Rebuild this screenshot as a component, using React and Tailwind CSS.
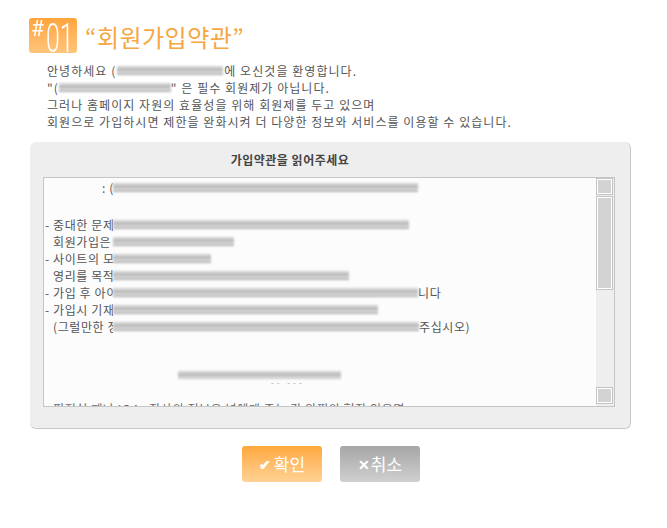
import React from "react";

const font = { fontFamily: '"Noto Sans CJK KR", "Noto Sans", sans-serif' };

function Blur({ w, className = "" }) {
  return (
    <span
      className={`inline-block h-[9px] align-middle blur-[0.8px] bg-[repeating-linear-gradient(180deg,#bdbdbd_0px,#ececec_2px,#9d9d9d_3px,#dcdcdc_5px)] ${className}`}
      style={{ width: w }}
    />
  );
}

function Row({ pre, bar, post, indent }) {
  return (
    <div className="flex items-center h-[17px] whitespace-nowrap">
      <span className={`w-[68px] shrink-0 overflow-hidden ${indent ? "pl-[8px]" : ""}`}>{pre}</span>
      {bar ? <Blur w={bar} /> : null}
      {post ? <span>{post}</span> : null}
    </div>
  );
}

function ScrollBtn() {
  return <div className="h-[17px] w-[17px] border border-[#c4c4c4] bg-[#d3d3d3] shadow-[inset_1px_1px_0_#fff,inset_-1px_-1px_0_#fff]" />;
}

export default function App() {
  return (
    <div className="w-[667px] h-[528px] bg-white text-[#555] text-[12px]" style={font}>
      {/* title */}
      <div className="flex items-center pt-[18px] pl-[29px] gap-[8px]">
        <div className="relative w-[48px] h-[35px] rounded-[3px] bg-gradient-to-b from-[#ffa53a] to-[#ffc47a] text-white overflow-hidden" style={{ fontFamily: "Roboto, sans-serif" }}>
          <span className="absolute left-[2px] top-[0px] text-[22px] leading-none origin-left scale-x-[0.95]">#</span>
          <span className="absolute left-[17px] top-[1px] text-[40px] leading-none font-light origin-left scale-x-[0.62]">01</span>
        </div>
        <div className="text-[24px] leading-[30px] text-[#f6a743] tracking-[0.5px] pt-[3px]">“회원가입약관”</div>
      </div>

      {/* intro */}
      <div className="pl-[47px] pt-[9px] leading-[17px] tracking-[1.05px]">
        <div className="flex items-center whitespace-nowrap">
          <span>안녕하세요 (</span>
          <Blur w={106} className="mx-[1px]" />
          <span>에 오신것을 환영합니다.</span>
        </div>
        <div className="flex items-center whitespace-nowrap">
          <span>"(</span>
          <Blur w={112} />
          <span>" 은 필수 회원제가 아닙니다.</span>
        </div>
        <div>그러나 홈페이지 자원의 효율성을 위해 회원제를 두고 있으며</div>
        <div>회원으로 가입하시면 제한을 완화시켜 더 다양한 정보와 서비스를 이용할 수 있습니다.</div>
      </div>

      {/* agreement panel */}
      <div className="ml-[30px] mt-[12px] w-[601px] h-[287px] rounded-[6px] bg-[#eeeeee] border-r border-b border-[#c9c9c9] pl-[13px] pr-[15px] flex flex-col">
        <div className="h-[35px] flex items-center justify-center pr-[78px] font-bold text-[#444] text-[12px] tracking-[0.5px]">가입약관을 읽어주세요</div>
        <div className="h-[230px] border border-[#c6c6c6] bg-[#fcfcfc] flex overflow-hidden">
          <div className="flex-1 pl-[1px] pt-[1px] leading-[17px] overflow-hidden tracking-[0.6px]">
            <div className="flex items-center h-[17px] whitespace-nowrap">
              <span className="pl-[57px] w-[68px] shrink-0">: (</span>
              <Blur w={305} />
            </div>
            <div className="h-[17px]" />
            <div className="h-[3px]" />
            <Row pre="- 중대한 문제가" bar={296} />
            <Row pre="회원가입은 필수" bar={121} indent />
            <Row pre="- 사이트의 모든" bar={98} />
            <Row pre="영리를 목적으로" bar={236} indent />
            <Row pre="- 가입 후 아이디" bar={305} post="니다" />
            <Row pre="- 가입시 기재하" bar={265} />
            <Row pre="(그럴만한 정보" bar={306} post=" 주십시오)" indent />
            <div className="h-[17px]" />
            <div className="h-[17px]" />
            <div className="h-[17px] flex flex-col items-start pl-[133px] pt-[2px]">
              <Blur w={163} />
              <span className="ml-[93px] mt-[1px] text-[8px] leading-[6px] text-[#999] tracking-[3px]">-- ---</span>
            </div>
            <div className="h-[14px]" />
            <div className="whitespace-nowrap pl-[8px] text-[#666]">피전실 때나 IQ4 , 잡사의 정보유 넘에게 주는 각 악쩐의 형잘 인은면</div>
          </div>
          <div className="w-[18px] bg-[#eeeeee] flex flex-col">
            <ScrollBtn />
            <div className="flex-1 pt-[1px]">
              <div className="h-[94px] w-[17px] border border-[#c4c4c4] bg-[#d3d3d3] shadow-[inset_1px_1px_0_#fff,inset_-1px_-1px_0_#fff]" />
            </div>
            <ScrollBtn />
            <div className="h-[2px]" />
          </div>
        </div>
      </div>

      {/* buttons */}
      <div className="flex justify-center gap-[18px] mt-[17px] pr-[5px]">
        <button className="w-[80px] h-[36px] rounded-[3px] bg-gradient-to-b from-[#ffa83c] to-[#ffd292] text-white text-[17px] flex items-center justify-center gap-[3px]">
          <span className="text-[14px] font-bold">✔</span>확인
        </button>
        <button className="w-[80px] h-[36px] rounded-[3px] bg-gradient-to-b from-[#a6a6a6] to-[#d0d0d0] text-white text-[17px] flex items-center justify-center gap-[1px]">
          <span className="text-[14px] font-bold">✕</span>취소
        </button>
      </div>
    </div>
  );
}
